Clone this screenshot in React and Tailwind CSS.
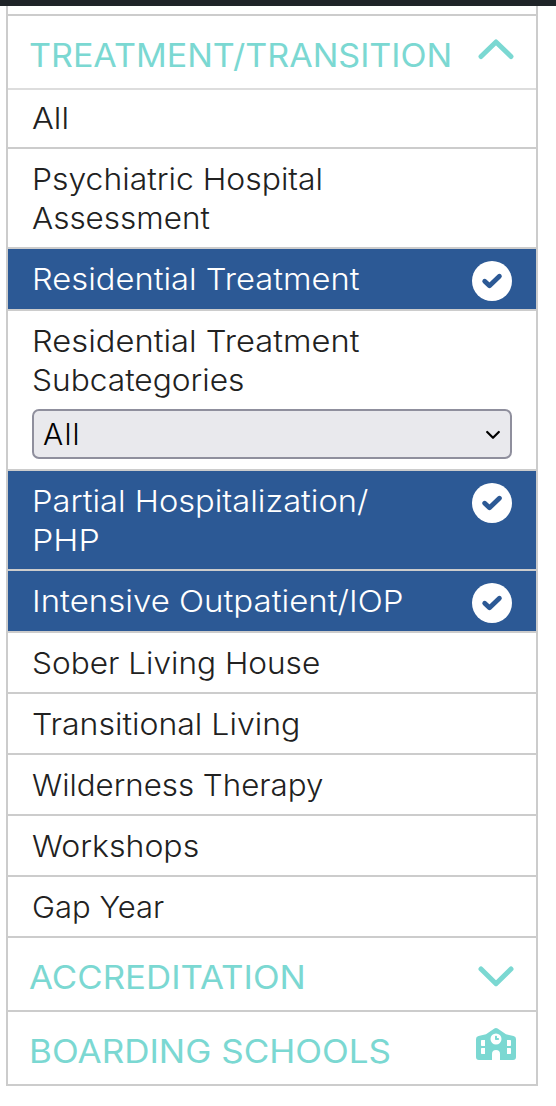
import { useState } from 'react';

const treatments = [
 { id: 'all', lines: ['All'], stretch: ['scale-x-[1.08]'], pad: 'pt-[9px] pb-[9px]' },
 { id: 'hospital', lines: ['Psychiatric Hospital', 'Assessment'], stretch: ['scale-x-[1.063]', 'scale-x-[1.048]'], pad: 'pt-[11px] pb-[9px]' },
 { id: 'residential', lines: ['Residential Treatment'], stretch: ['scale-x-[1.09]'], pad: 'pt-[11px] pb-[10px]' },
 { id: 'residential-sub', lines: ['Residential Treatment', 'Subcategories'], stretch: ['scale-x-[1.09]', 'scale-x-[1.056]'], pad: 'pt-[11px] pb-[10px]', select: true },
 { id: 'php', lines: ['Partial Hospitalization/', 'PHP'], stretch: ['scale-x-[1.088]', 'scale-x-[1.13]'], pad: 'pt-[11px] pb-[9px]' },
 { id: 'iop', lines: ['Intensive Outpatient/IOP'], stretch: ['scale-x-[1.1]'], pad: 'pt-[11px] pb-[10px]' },
 { id: 'sober', lines: ['Sober Living House'], stretch: ['scale-x-[1.053]'], pad: 'pt-[11px] pb-[9px]' },
 { id: 'transitional', lines: ['Transitional Living'], stretch: ['scale-x-[1.067]'], pad: 'pt-[11px] pb-[9px]' },
 { id: 'wilderness', lines: ['Wilderness Therapy'], stretch: ['scale-x-[1.042]'], pad: 'pt-[11px] pb-[9px]' },
 { id: 'workshops', lines: ['Workshops'], stretch: ['scale-x-[1.067]'], pad: 'pt-[11px] pb-[9px]' },
 { id: 'gap', lines: ['Gap Year'], stretch: ['scale-x-[1.033]'], pad: 'pt-[11px] pb-[9px]' },
];

const Chevron = ({ up }) => (
 <svg viewBox="0 0 36 22" className="w-9 h-[22px]" fill="none" stroke="currentColor" strokeWidth="5" strokeLinecap="round" strokeLinejoin="round">
 <path d={up ? 'M3 18.5 18 4l15 14.5' : 'M3 4l15 14.7L33 4'} />
 </svg>
);

const CheckBadge = () => (
 <svg viewBox="0 0 40 40" className="w-10 h-10 shrink-0" fill="none">
 <circle cx="20" cy="20" r="20" fill="#fff" />
 <path d="M12.700 20.200l4.800 4.600 9.900-9.600" stroke="#2c5995" strokeWidth="4.800" strokeLinecap="round" strokeLinejoin="round" />
 </svg>
);

const SchoolIcon = () => (
 <svg viewBox="0 0 40 32" className="w-10 h-8" fill="currentColor">
 <path
 fillRule="evenodd"
 d="M2.5 8 10 6.2 18.4.5Q20-.4 21.6.5L30 6.2 37.5 8Q40 8.6 40 11V29Q40 32 37 32H24V26a4 4 0 0 0-8 0V32H3Q0 32 0 29V11Q0 8.6 2.5 8ZM5.8 12a.8.8 0 0 0-.8.8v4.4a.8.8 0 0 0 .8.8H9V12ZM5.8 20a.8.8 0 0 0-.8.8v4.400a.8.8 0 0 0 .8.8H9V20ZM31 12v6h3.200a.8.8 0 0 0 .8-.8v-4.400a.8.8 0 0 0-.8-.8ZM31 20v6h3.200a.8.8 0 0 0 .8-.8v-4.400a.8.8 0 0 0-.8-.8ZM20 5.500a5.500 5.500 0 1 0 0 11 5.500 5.500 0 0 0 0-11Z"
 />
 <path d="M19 8.600a.8.8 0 0 1 .8-.8h.4a.8.8 0 0 1 .8.8V10h1.200a.8.8 0 0 1 .8.8v.4a.8.8 0 0 1-.8.8H19.800a.8.8 0 0 1-.8-.8Z" />
 </svg>
);

const SectionHeader = ({ title, stretch, icon, iconPad, border }) => (
 <div className={`h-[74px] flex justify-between pt-5 pl-[21px] border-b-2 text-[#7bd8d2] ${border}`}>
 <h2 className={`text-[32px] leading-[40px] font-normal whitespace-nowrap origin-left ${stretch}`}>{title}</h2>
 <div className={iconPad}>{icon}</div>
 </div>
);

export default function App() {
 const [selected, setSelected] = useState(['residential', 'php', 'iop']);

 const toggle = (id) => {
 setSelected(selected.includes(id) ? selected.filter(s => s !== id) : [...selected, id]);
 };

 return (
 <div className="h-[1106px] overflow-hidden bg-white font-['Inter',sans-serif] font-light">
 <div className="h-1.5 bg-[#1f2428]"></div>
 <div className="ml-1.5 w-[532px] border-x-2 border-[#ccc]">
 <div className="h-2.5 border-b-2 border-[#ccc]"></div>

 <SectionHeader title="TREATMENT/TRANSITION" stretch="scale-x-[1.064]" border="border-[#ddd]" iconPad="pt-[2px] pr-[22px]" icon={<Chevron up />} />

 {treatments.map(item => {
 const active = selected.includes(item.id);
 return (
 <div
 key={item.id}
 onClick={() => !item.select && toggle(item.id)}
 className={`px-6 border-b-2 border-[#ccc] ${item.pad} ${active ? 'bg-[#2c5995] text-white' : 'text-[#212121]'}`}
 >
 <div className="flex justify-between items-start">
 <div>
 {item.lines.map((line, i) => (
 <p key={line} className={`w-max text-[30px] leading-[39px] whitespace-nowrap origin-left ${item.stretch[i]}`}>{line}</p>
 ))}
 </div>
 {active && <div className="h-[39px] pt-px"><CheckBadge /></div>}
 </div>
 {item.select && (
 <div className="relative mt-[9px]">
 <select className="block appearance-none w-full h-[50px] pl-[9px] rounded-[7px] border-2 border-[#8f8f9d] bg-[#e9e9ed] text-black text-[30px] tracking-[1.2px]">
 <option>All</option>
 </select>
 <svg viewBox="0 0 14 9" className="absolute right-3 top-[21px] w-3.5 h-[9px] pointer-events-none" fill="none" stroke="#000" strokeWidth="2.2" strokeLinecap="round" strokeLinejoin="round">
 <path d="M1.200 2 7 7.800 12.800 2" />
 </svg>
 </div>
 )}
 </div>
 );
 })}

 <SectionHeader title="ACCREDITATION" stretch="scale-x-[1.088]" border="border-[#ccc]" iconPad="pt-[7px] pr-[22px]" icon={<Chevron />} />
 <SectionHeader title="BOARDING SCHOOLS" stretch="scale-x-[1.094]" border="border-[#ccc]" iconPad="-mt-1 pr-5" icon={<SchoolIcon />} />
 </div>
 </div>
 );
}
